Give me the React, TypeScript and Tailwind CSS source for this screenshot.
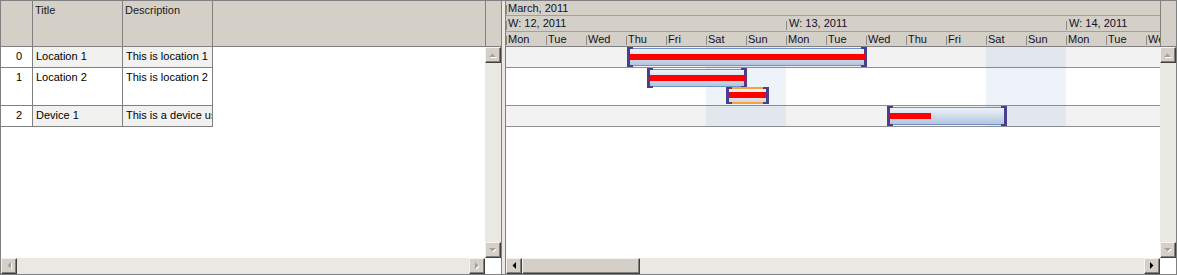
import * as React from 'react';

// Gantt / grid control, classic Windows look

const DAYS = ['Mon', 'Tue', 'Wed', 'Thu', 'Fri', 'Sat', 'Sun'];

function Arrow({ dir, active }: { dir: 'up' | 'down' | 'left' | 'right'; active?: boolean }) {
  const fill = active ? '#000000' : '#a0a0a0';
  const shadow = active ? null : '#ffffff';
  const pts: Record<string, string> = {
    up: '0,4 3.5,0.5 7,4',
    down: '0,0 3.5,3.5 7,0',
    left: '4,0 0.5,3.5 4,7',
    right: '0,0 3.5,3.5 0,7',
  };
  const vertical = dir === 'up' || dir === 'down';
  const w = vertical ? 7 : 4;
  const h = vertical ? 4 : 7;
  return (
    <svg width={w + 1} height={h + 1} viewBox={`0 0 ${w + 1} ${h + 1}`}>
      {shadow && <polygon points={pts[dir]} fill={shadow} transform="translate(1,1)" />}
      <polygon points={pts[dir]} fill={fill} />
    </svg>
  );
}

function SbButton({ dir, active }: { dir: 'up' | 'down' | 'left' | 'right'; active?: boolean }) {
  return (
    <div className="w-[16px] h-[16px] shrink-0 box-border bg-[#d4d0c8] border border-[#f4f3ee] border-r-[#404040] border-b-[#404040] shadow-[inset_-1px_-1px_0_#808080] flex items-center justify-center">
      <Arrow dir={dir} active={active} />
    </div>
  );
}

function VScroll() {
  return (
    <div className="w-[16px] h-full bg-[#eae8e3] flex flex-col justify-between">
      <SbButton dir="up" />
      <SbButton dir="down" />
    </div>
  );
}

function HScroll({ active, thumb }: { active?: boolean; thumb?: number }) {
  return (
    <div className="h-[16px] flex-1 bg-[#eae8e3] flex">
      <SbButton dir="left" active={active} />
      <div className="flex-1 flex">
        {thumb ? (
          <div
            className="h-[16px] box-border bg-[#d4d0c8] border border-[#f4f3ee] border-r-[#404040] border-b-[#404040] shadow-[inset_-1px_-1px_0_#808080]"
            style={{ width: thumb }}
          />
        ) : null}
      </div>
      <SbButton dir="right" active={active} />
    </div>
  );
}

const rows = [
  { id: 0, title: 'Location 1', desc: 'This is location 1', h: 'h-[21px]', alt: true },
  { id: 1, title: 'Location 2', desc: 'This is location 2', h: 'h-[38px]', alt: false },
  { id: 2, title: 'Device 1', desc: 'This is a device used', h: 'h-[21px]', alt: true },
];

function LeftGrid() {
  return (
    <div className="w-[500px] h-full flex flex-col border-r border-[#808080] box-content">
      {/* header */}
      <div className="h-[46px] shrink-0 flex bg-[#d4d0c8] border-b border-[#808080] box-border">
        <div className="w-[32px] border-r border-[#808080]" />
        <div className="w-[90px] border-r border-[#808080] pl-[2px] pt-[2px] text-[#1a1a1a]">Title</div>
        <div className="w-[90px] border-r border-[#808080] pl-[2px] pt-[2px] text-[#1a1a1a]">Description</div>
        <div className="w-[273px] border-r border-[#808080]" />
        <div className="flex-1" />
      </div>
      {/* body */}
      <div className="h-[211px] flex">
        <div className="flex-1 bg-white">
          {rows.map((r) => (
            <div key={r.id} className={`${r.h} w-[212px] flex border-b border-[#808080] box-border`}>
              <div className="w-[32px] border-r border-[#808080] bg-white text-right pr-[10px] pt-[2px]">{r.id}</div>
              <div className={`w-[90px] border-r border-[#808080] pl-[3px] pt-[2px] ${r.alt ? 'bg-[#f1f2f0]' : 'bg-white'}`}>
                {r.title}
              </div>
              <div
                className={`w-[90px] border-r border-[#808080] pl-[3px] pt-[2px] overflow-hidden whitespace-nowrap ${r.alt ? 'bg-[#f1f2f0]' : 'bg-white'}`}
              >
                {r.desc}
              </div>
            </div>
          ))}
        </div>
        <VScroll />
      </div>
      {/* bottom scrollbar */}
      <div className="h-[16px] flex">
        <HScroll />
        <div className="w-[16px] bg-white" />
      </div>
    </div>
  );
}

const tick =
  "relative shrink-0 pl-[2px] before:absolute before:left-0 before:bottom-[1px] before:h-[9px] before:w-px before:bg-[#8a8a8a]";

type Bar = { left: number; top: number; width: number; height: number; progress: number; child?: boolean };

const bars: Bar[] = [
  { left: 121, top: 1, width: 240, height: 18, progress: 1 },
  { left: 141, top: 22, width: 100, height: 18, progress: 1 },
  { left: 221, top: 40, width: 41, height: 17, progress: 1, child: true },
  { left: 381, top: 60, width: 120, height: 18, progress: 0.35 },
];

function GanttBar({ b }: { b: Bar }) {
  return (
    <div
      className={`absolute box-border ${
        b.child
          ? 'border-y-2 border-y-[#f3a43e] bg-linear-to-b from-[#f4f4f4] to-[#d6d6de]'
          : 'border border-[#6f95c8] bg-linear-to-b from-[#eef3fa] to-[#b3c5de]'
      }`}
      style={{ left: b.left, top: b.top, width: b.width, height: b.height }}
    >
      {/* brackets */}
      <div className="absolute left-[-1px] top-[-2px] bottom-[-2px] w-[3px] bg-[#4a3e8e]" />
      <div className="absolute left-[-1px] top-[-2px] w-[6px] h-[2px] bg-[#4a3e8e]" />
      <div className="absolute left-[-1px] bottom-[-2px] w-[6px] h-[2px] bg-[#4a3e8e]" />
      <div className="absolute right-[-1px] top-[-2px] bottom-[-2px] w-[3px] bg-[#4a3e8e]" />
      <div className="absolute right-[-1px] top-[-2px] w-[6px] h-[2px] bg-[#4a3e8e]" />
      <div className="absolute right-[-1px] bottom-[-2px] w-[6px] h-[2px] bg-[#4a3e8e]" />
      {/* progress */}
      <div
        className={`absolute ${b.child ? 'top-[3px]' : 'top-[5px]'} h-[6px] left-[2px] bg-[#ff0000]`}
        style={{ width: Math.round((b.width - 4) * b.progress) }}
      />
    </div>
  );
}

function Gantt() {
  const dayCount = 17;
  return (
    <div className="flex-1 h-full flex flex-col border-l border-[#808080] box-content">
      <div className="flex h-[257px]">
        <div className="w-[654px] flex flex-col overflow-hidden">
          {/* timescale header */}
          <div className="h-[46px] shrink-0 bg-[#d4d0c8] text-[#10102a]">
            <div className="h-[15px] border-b border-[#a3a09a] box-border flex">
              <div className={`${tick} w-[654px] leading-[14px]`}>March, 2011</div>
            </div>
            <div className="h-[16px] border-b border-[#a3a09a] box-border flex">
              {['W: 12, 2011', 'W: 13, 2011', 'W: 14, 2011'].map((w, i) => (
                <div key={w} className={`${tick} w-[280px] leading-[15px] ${i > 0 ? 'pl-[3px]' : ''}`}>
                  {w}
                </div>
              ))}
            </div>
            <div className="h-[15px] border-b border-[#808080] box-border flex">
              {Array.from({ length: dayCount }).map((_, i) => (
                <div key={i} className={`${tick} w-[40px] leading-[14px]`}>
                  {DAYS[i % 7]}
                </div>
              ))}
            </div>
          </div>
          {/* chart body */}
          <div className="relative h-[211px] bg-white">
            <div className="h-[21px] bg-[#f1f2f1] border-b border-[#8f8f8f] box-border" />
            <div className="h-[38px] bg-white border-b border-[#8f8f8f] box-border" />
            <div className="h-[21px] bg-[#f1f2f1] border-b border-[#8f8f8f] box-border" />
            <div className="absolute left-[200px] top-0 w-[80px] h-[80px] bg-[#5a8ad2]/10" />
            <div className="absolute left-[480px] top-0 w-[80px] h-[80px] bg-[#5a8ad2]/10" />
            {bars.map((b, i) => (
              <GanttBar key={i} b={b} />
            ))}
          </div>
        </div>
        <div className="w-[16px] flex flex-col">
          <div className="h-[46px] bg-[#d4d0c8] border-l border-b border-[#808080] box-border" />
          <div className="h-[211px]">
            <VScroll />
          </div>
        </div>
      </div>
      <div className="h-[16px] flex">
        <HScroll active thumb={118} />
        <div className="w-[16px] bg-white" />
      </div>
    </div>
  );
}

export default function App() {
  return (
    <div className="w-[1177px] h-[275px] box-border border border-[#808080] bg-white flex font-['Liberation_Sans',Arial,sans-serif] text-[11px] leading-[14px] text-black overflow-hidden">
      <LeftGrid />
      <div className="w-[3px] h-full bg-[#ece9e4]" />
      <Gantt />
    </div>
  );
}
